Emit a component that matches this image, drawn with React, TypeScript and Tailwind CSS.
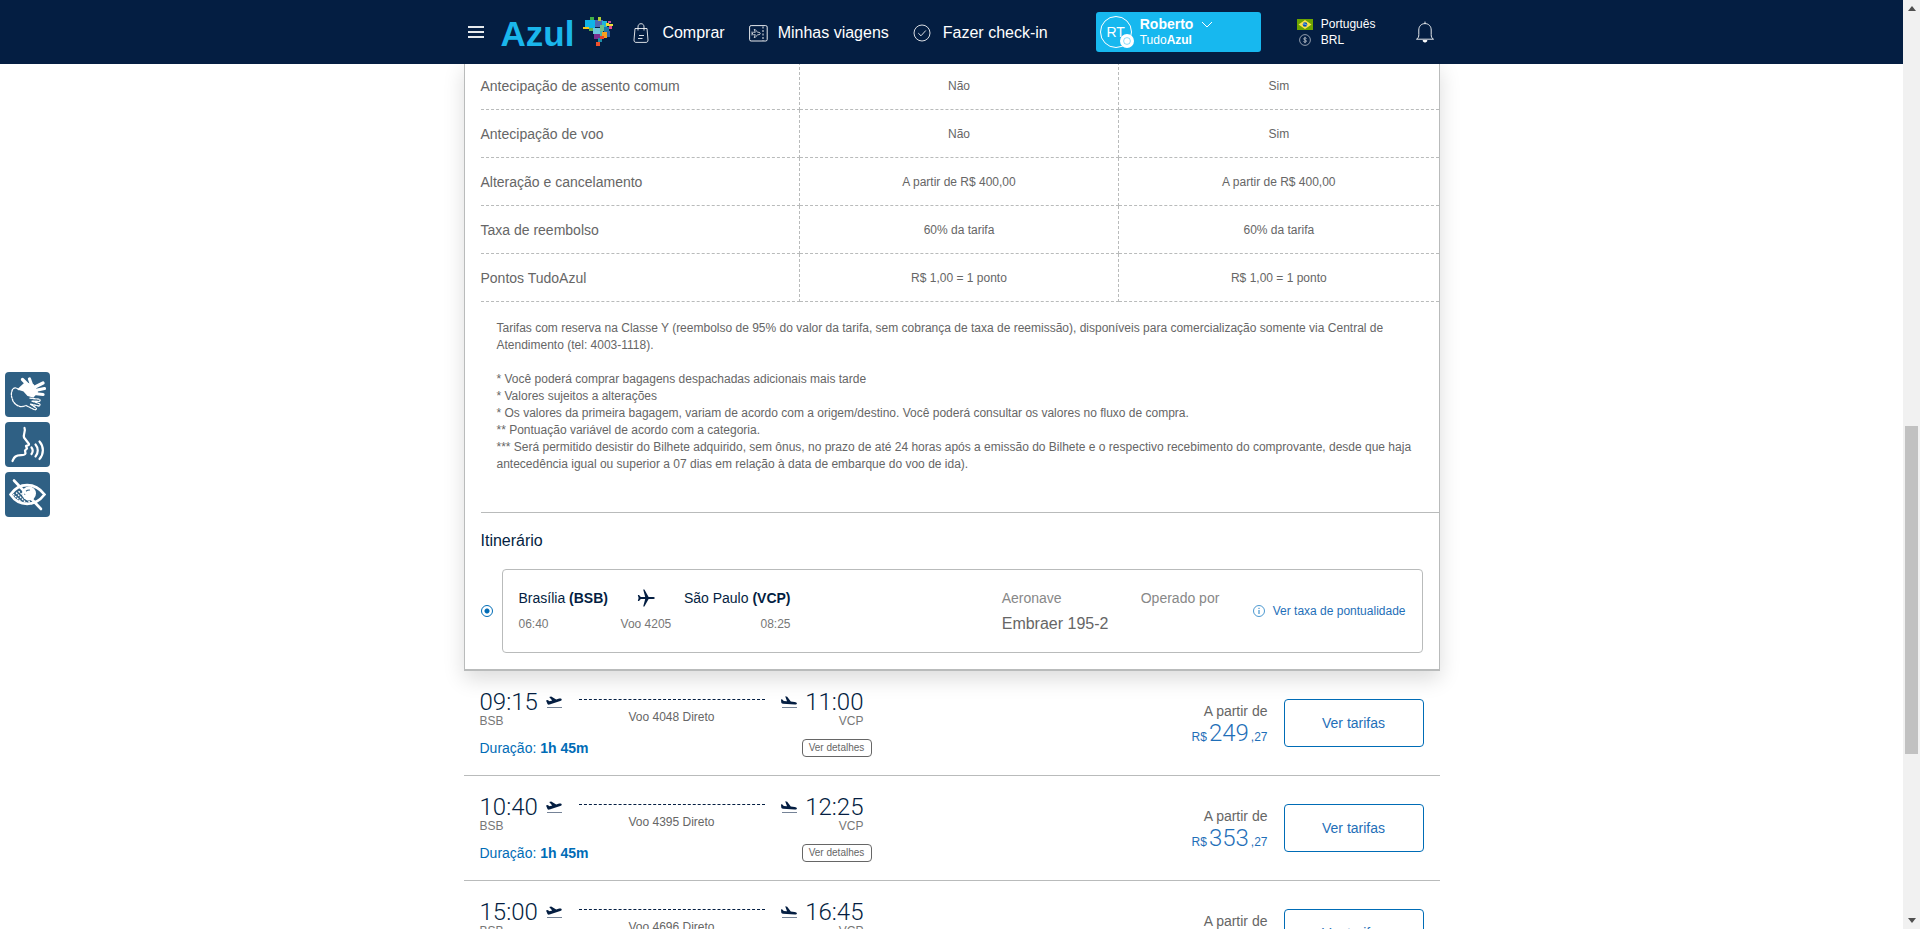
import React from "react";

const fares = [
  ["Antecipação de assento comum", "Não", "Sim"],
  ["Antecipação de voo", "Não", "Sim"],
  ["Alteração e cancelamento", "A partir de R$ 400,00", "A partir de R$ 400,00"],
  ["Taxa de reembolso", "60% da tarifa", "60% da tarifa"],
  ["Pontos TudoAzul", "R$ 1,00 = 1 ponto", "R$ 1,00 = 1 ponto"],
];

const flights = [
  { dep: "09:15", arr: "11:00", no: "4048", price: "249" },
  { dep: "10:40", arr: "12:25", no: "4395", price: "353" },
  { dep: "15:00", arr: "16:45", no: "4696", price: "353" },
];

const mapTiles: [number, number, number, number, string][] = [
  [2, 3, 10, 8, "#10b5e8"],
  [7, 0, 4, 3, "#3fae49"],
  [0, 10, 6, 2, "#f2c81b"],
  [12, 3, 8, 7, "#5069b3"],
  [15, 0, 3, 4, "#b5cf35"],
  [19, 4, 5, 6, "#22b5d8"],
  [23, 6, 3, 3, "#f4dc2a"],
  [25, 4, 3, 2, "#c04fa0"],
  [26, 7, 4, 2, "#e9e13a"],
  [6, 11, 5, 3, "#5fb446"],
  [10, 11, 7, 6, "#6cc7dd"],
  [17, 8, 4, 6, "#6cc08a"],
  [21, 10, 5, 5, "#1c78a8"],
  [26, 9, 3, 3, "#e64a8b"],
  [17, 14, 3, 5, "#4fb5a6"],
  [11, 17, 6, 5, "#7b2f8e"],
  [19, 15, 5, 6, "#f7a01e"],
  [24, 14, 3, 6, "#2c62a8"],
  [15, 21, 4, 4, "#1d8fa8"],
  [17, 19, 4, 3, "#e4432c"],
  [13, 25, 4, 4, "#f0502b"],
];

function BrazilMap() {
  return (
    <svg width="30" height="30" viewBox="0 0 30 30" shapeRendering="crispEdges" aria-hidden="true">
      {mapTiles.map(([x, y, w, h, c], i) => (
        <rect key={i} x={x} y={y} width={w} height={h} fill={c} />
      ))}
    </svg>
  );
}

function TakeoffIcon() {
  return (
    <svg width="16" height="13" viewBox="0 0 16 13" aria-hidden="true">
      <path d="M0 4.600 1.600 4.100 3.600 5.200 6.200 4.500 3.200 1 5.200.4 10.200 3.400 13.200 2.600C14.600 2.300 15.600 2.700 15.700 3.500 15.800 4.300 15.200 4.800 14.200 5L3.600 8.500C2.500 8.800 1.900 8.600 1.500 7.900Z" fill="#041e42" />
      <path d="M1 11.500H16" stroke="#041e42" strokeOpacity=".55" />
    </svg>
  );
}

function LandingIcon() {
  return (
    <svg width="16" height="13" viewBox="0 0 16 13" aria-hidden="true">
      <path d="M0 3.200 1.400 3.400 2.800 5 6 5.300 4.200.3 6.200.8 9.800 5.600 13.600 5.900C15 6 15.900 6.600 15.900 7.500 15.900 8.400 15 8.700 13.800 8.600L2 7.700C.8 7.600.3 7 .2 6Z" fill="#041e42" />
      <path d="M1 11.500H16" stroke="#041e42" strokeOpacity=".55" />
    </svg>
  );
}

function Header() {
  return (
    <header className="relative z-10 h-16 shrink-0 bg-[#041e42] text-white">
      <div className="mx-auto flex h-full w-full max-w-[976px] items-center">
        <button aria-label="Menu" className="ml-1 flex w-4 flex-col gap-[3px]">
          <span className="h-[2px] w-4 bg-white/90" />
          <span className="h-[2px] w-4 bg-white/90" />
          <span className="h-[2px] w-4 bg-white/90" />
        </button>
        <a href="#" className="ml-[17px] flex items-center gap-[9px]">
          <span className="pt-1 text-[35px] leading-9 font-bold text-[#1ab6ec]">Azul</span>
          <BrazilMap />
        </a>
        <nav className="ml-5 flex items-center gap-6 pt-[2px] text-base">
          <a href="#" className="flex items-center gap-[13px]">
            <svg width="16" height="20" viewBox="0 0 16 20" fill="none" stroke="#fff" strokeOpacity=".85" aria-hidden="true">
              <path d="M2 5.500H14L15 17C15 18.500 14.300 19.400 13 19.400H3C1.700 19.400 1 18.500 1 17Z" />
              <path d="M5 7.500V4C5 2 6 .7 8 .7S11 2 11 4V7.500M6 12.500H11M5 15.500H9.500" />
            </svg>
            Comprar
          </a>
          <a href="#" className="flex items-center gap-[10px]">
            <svg width="19" height="17" viewBox="0 0 19 17" fill="none" stroke="#fff" strokeOpacity=".9" aria-hidden="true">
              <rect x=".6" y=".6" width="17.600" height="15.400" rx="1.500" />
              <path d="M14 1.500V16" strokeDasharray="2 1.500" />
              <path d="M3 6.500V10.500M3 8.500 4.500 7.300H6.300L5.200 4.500H6.200L8.600 7.300H10C11.700 7.700 11.700 9.300 10 9.700H8.600L6.200 12.500H5.200L6.300 9.700H4.500Z" strokeWidth=".8" />
            </svg>
            Minhas viagens
          </a>
          <a href="#" className="flex items-center gap-3">
            <svg width="18" height="18" viewBox="0 0 18 18" fill="none" stroke="#fff" strokeOpacity=".85" aria-hidden="true">
              <circle cx="9" cy="9" r="8" />
              <path d="M5.300 9.200 8 11.800 12.800 6.500" />
            </svg>
            Fazer check-in
          </a>
        </nav>
        <button className="ml-12 flex h-10 w-[165px] items-center gap-2 rounded-[3px] bg-[#17b8ef] pl-1 text-left">
          <span className="relative flex size-8 items-center justify-center rounded-full border border-white text-sm">
            RT
            <svg className="absolute -right-[3px] -bottom-[1px]" width="14" height="14" viewBox="0 0 14 14" aria-hidden="true">
              <circle cx="7" cy="7" r="7" fill="#fff" />
              <circle cx="7" cy="7" r="3.400" fill="none" stroke="#17b8ef" strokeOpacity=".5" />
            </svg>
          </span>
          <span className="flex flex-col">
            <span className="flex items-center gap-2 text-sm leading-4 font-bold">
              Roberto
              <svg width="12" height="7" viewBox="0 0 12 7" fill="none" stroke="#fff" aria-hidden="true">
                <path d="M1 1 6 6 11 1" />
              </svg>
            </span>
            <span className="text-xs leading-4">
              Tudo<b>Azul</b>
            </span>
          </span>
        </button>
        <div className="ml-9 flex flex-col text-xs leading-4">
          <button className="flex items-center gap-2 text-left">
            <svg width="16" height="11" viewBox="0 0 16 11" aria-hidden="true">
              <rect width="16" height="11" fill="#6ca400" />
              <path d="M8 1 14.500 5.500 8 10 1.500 5.500Z" fill="#ffe14d" />
              <circle cx="8" cy="5.500" r="2.300" fill="#0052b4" />
              <path d="M5.900 5C7.500 4.700 9 5.200 10 6.400" stroke="#fff" strokeWidth=".6" fill="none" />
            </svg>
            Português
          </button>
          <button className="flex items-center gap-2 text-left">
            <svg className="mx-[2px]" width="12" height="12" viewBox="0 0 12 12" fill="none" stroke="#fff" strokeOpacity=".7" aria-hidden="true">
              <circle cx="6" cy="6" r="5.400" strokeWidth=".8" />
              <path d="M7.600 4.600C7.400 3.600 4.600 3.500 4.600 4.900S7.600 5.800 7.600 7.100 4.600 8.500 4.400 7.300M6 2.800V9.200" strokeWidth=".8" />
            </svg>
            BRL
          </button>
        </div>
        <button aria-label="Notificações" className="ml-10">
          <svg width="20" height="22" viewBox="0 0 20 22" fill="none" stroke="#fff" strokeOpacity=".9" aria-hidden="true">
            <path d="M1.500 18.200C3.300 17.200 3.800 15.800 3.800 13.500V9C3.800 5.300 6.300 2.600 10 2.600S16.200 5.300 16.200 9V13.500C16.200 15.800 16.700 17.200 18.500 18.200ZM10 .6V2.600" />
            <path d="M8 19.500H12C12 21.600 8 21.600 8 19.500Z" fill="#fff" />
          </svg>
        </button>
      </div>
    </header>
  );
}

function FareDetails() {
  return (
    <section className="relative -mt-[2px] border-x border-b-2 border-[#b9bbbb] bg-white pl-4 shadow-[0_8px_20px_rgba(0,0,0,0.14)]">
      <table className="w-full table-fixed border-separate border-spacing-0 text-[#666]">
        <tbody>
          {fares.map(([label, a, b]) => (
            <tr key={label} className="h-12">
              <th scope="row" className="border-r border-b border-dashed border-[#b9bbbb] text-left text-sm font-normal">{label}</th>
              <td className="border-r border-b border-dashed border-[#b9bbbb] text-center text-xs">{a}</td>
              <td className="border-b border-dashed border-[#b9bbbb] text-center text-xs">{b}</td>
            </tr>
          ))}
        </tbody>
      </table>
      <div className="px-4 pt-[18px] pb-[39px] text-xs leading-[17px] text-[#666]">
        <p>
          Tarifas com reserva na Classe Y (reembolso de 95% do valor da tarifa, sem cobrança de taxa de reemissão), disponíveis para comercialização somente via Central de Atendimento (tel: 4003-1118).
        </p>
        <p className="mt-[17px]">* Você poderá comprar bagagens despachadas adicionais mais tarde</p>
        <p>* Valores sujeitos a alterações</p>
        <p>* Os valores da primeira bagagem, variam de acordo com a origem/destino. Você poderá consultar os valores no fluxo de compra.</p>
        <p>** Pontuação variável de acordo com a categoria.</p>
        <p>
          *** Será permitido desistir do Bilhete adquirido, sem ônus, no prazo de até 24 horas após a emissão do Bilhete e o respectivo recebimento do comprovante, desde que haja antecedência igual ou superior a 07 dias em relação à data de embarque do voo de ida).
        </p>
      </div>
      <div className="border-t border-[#b9bbbb] py-4 pr-4">
        <h2 className="text-base leading-6 text-[#041e42]">Itinerário</h2>
        <div className="mt-4 flex items-center gap-[9px]">
          <input
            type="radio"
            name="itinerary"
            defaultChecked
            aria-label="Voo 4205"
            className="size-3 shrink-0 appearance-none rounded-full border border-[#006cb6] bg-[radial-gradient(circle,#006cb6_2px,white_3px)]"
          />
          <div className="flex h-[84px] flex-1 items-center rounded border border-[#b9bbbb] px-4">
            <div className="grid w-[272px] grid-cols-[auto_auto_auto] items-center justify-between gap-y-[6px] text-xs leading-5 text-[#777]">
              <span className="text-sm leading-5 text-[#041e42]">Brasília <b>(BSB)</b></span>
              <svg className="justify-self-center" width="18" height="18" viewBox="0 0 18 18" fill="#041e42" aria-hidden="true">
                <path d="M17.800 9C17.800 9.600 16.900 10 15.600 10H11.600L7.400 17.600H6.200L8.200 10H3.800L2 12H.8L1.600 9 .8 6H2L3.800 8H8.200L6.200.4H7.400L11.600 8H15.600C16.900 8 17.800 8.400 17.800 9Z" />
              </svg>
              <span className="text-sm leading-5 text-[#041e42]">São Paulo <b>(VCP)</b></span>
              <span>06:40</span>
              <span>Voo 4205</span>
              <span className="text-right">08:25</span>
            </div>
            <div className="ml-auto flex w-[139px] flex-col gap-[6px]">
              <span className="text-sm leading-5 text-[#888]">Aeronave</span>
              <span className="text-base leading-5 text-[#666]">Embraer 195-2</span>
            </div>
            <div className="flex w-[112px] flex-col gap-[6px]">
              <span className="text-sm leading-5 text-[#888]">Operado por</span>
              <span className="h-5" />
            </div>
            <a href="#" className="flex items-center gap-2 text-xs text-[#1f6fb8]">
              <svg width="12" height="12" viewBox="0 0 12 12" fill="none" stroke="#1f7fc4" aria-hidden="true">
                <circle cx="6" cy="6" r="5.500" strokeWidth=".8" />
                <path d="M6 5V9M6 2.800V4" />
              </svg>
              Ver taxa de pontualidade
            </a>
          </div>
        </div>
      </div>
    </section>
  );
}

function FlightRow({ f }: { f: (typeof flights)[number] }) {
  return (
    <li className="flex h-[105px] shrink-0 items-start justify-between border-b border-[#b9bbbb] px-4">
      <div className="flex w-[392px] flex-col pt-[19px]">
        <div className="flex items-start justify-between pr-2">
          <div className="flex flex-col">
            <span className="flex items-center gap-2 font-[Roboto] text-2xl leading-6 font-light text-[#041e42]">
              {f.dep} <TakeoffIcon />
            </span>
            <span className="text-xs leading-[14px] text-[#777]">BSB</span>
          </div>
          <div className="flex w-[186px] flex-col items-center gap-[9px] pt-[9px] text-xs leading-4 text-[#666]">
            <span className="w-full border-t border-dashed border-[#041e42]" />
            <span>Voo {f.no} Direto</span>
          </div>
          <div className="flex flex-col items-end">
            <span className="flex items-center gap-2 font-[Roboto] text-2xl leading-6 font-light text-[#041e42]">
              <LandingIcon /> {f.arr}
            </span>
            <span className="text-xs leading-[14px] text-[#777]">VCP</span>
          </div>
        </div>
        <div className="mt-[11px] flex items-center justify-between">
          <span className="text-sm leading-[18px] text-[#006cb6]">
            Duração: <b>1h 45m</b>
          </span>
          <button className="h-[18px] w-[70px] rounded border border-[#666] text-[10px] leading-4 text-[#666]">Ver detalhes</button>
        </div>
      </div>
      <div className="flex gap-4 pt-7">
        <div className="flex flex-col items-end pt-[2px] text-[#1f6fb8]">
          <span className="text-sm leading-5 text-[#666]">A partir de</span>
          <span className="flex items-baseline gap-[2px] text-xs leading-6">
            R$<span className="font-[Roboto] text-2xl leading-6 font-light">{f.price}</span>,27
          </span>
        </div>
        <button className="h-12 w-[140px] rounded border border-[#006cb6] text-sm text-[#1f6fb8]">Ver tarifas</button>
      </div>
    </li>
  );
}

function AccessibilityBar() {
  const tile = "flex size-[45px] items-center justify-center rounded bg-[#2f6084]";
  return (
    <aside className="fixed top-[372px] left-[5px] z-20 flex flex-col gap-[5px]">
      <button aria-label="Libras" className={tile}>
        <svg width="37" height="37" viewBox="0 0 37 37" fill="none" stroke="#fff" strokeLinecap="round" strokeLinejoin="round" aria-hidden="true">
          <path d="M10 13 16 7.500 24 9 28 16 24 20.500 19 19 15 14.500Z" fill="#fff" strokeWidth="2" />
          <path d="M19 9 13.500 3.500M23 10 20.500 3M25 11.500 34 7M26 14.500 35.500 12.500M25 17.500 34 18.500" strokeWidth="3.200" />
          <path d="M9.500 13.500C7 11 3.500 11.500 3 15 1.500 19 3 22 4 25 7 30 12 32 17 29.500L25 33.500C27.500 34.500 28 32.500 26.500 31.500L21 28 29.500 30C31.500 30 31.500 28 30 27.500L22.500 25 30 25.500C31.500 25 31.500 23.500 30 23.200L20 22" strokeWidth="1.300" strokeDasharray="2.200 1.200" />
        </svg>
      </button>
      <button aria-label="Voz" className={tile}>
        <svg width="37" height="37" viewBox="0 0 37 37" fill="none" stroke="#fff" strokeWidth="2.200" strokeLinecap="round" strokeLinejoin="round" aria-hidden="true">
          <path d="M15.500 2C17 5 14 8 15 11.500L20 18C20.500 19.500 18 19.500 17 20L18 22.500 16 24.500 16.500 27.500C15.500 30.500 10 28 6.500 30.500 4.500 32 4.500 33 3.500 35" />
          <path d="M22.500 21.500C24 23.500 24 26 22.500 28M26.500 18.500C29.500 22 29.500 27 26.500 30.500M30.500 15.500C35 20.500 35 28 30.500 33" />
        </svg>
      </button>
      <button aria-label="Alto contraste" className={tile}>
        <svg width="37" height="37" viewBox="0 0 37 37" fill="none" stroke="#fff" strokeWidth="2.600" strokeLinecap="round" aria-hidden="true">
          <path d="M1.500 18.500C10 6 26 6 35.500 18.500 26 31 10 31 1.500 18.500Z" />
          <path d="M4.500 18.500 14.500 28M7.500 17 19 29M10 15.500 23 28.500" strokeWidth="1.400" strokeDasharray=".6 2.200" />
          <circle cx="20" cy="17.500" r="7" fill="#fff" stroke="none" />
          <path d="M16 18.500C16 15.500 18 14 20.500 14" stroke="#2f6084" strokeWidth="1.200" />
          <path d="M5 4.500 32 33" />
        </svg>
      </button>
    </aside>
  );
}

function ScrollTrack() {
  return (
    <div aria-hidden="true" className="flex w-[17px] shrink-0 flex-col items-center bg-[#f1f1f1] py-[6px]">
      <svg width="8" height="5" viewBox="0 0 8 5" fill="#505050"><path d="M4 0 8 5H0Z" /></svg>
      <div className="flex-[415]" />
      <div className="w-[13px] flex-[328] bg-[#c1c1c1]" />
      <div className="flex-[164]" />
      <svg width="8" height="5" viewBox="0 0 8 5" fill="#505050"><path d="M0 0H8L4 5Z" /></svg>
    </div>
  );
}

export default function App() {
  return (
    <div className="flex h-screen overflow-hidden bg-white font-['Liberation_Sans',Arial,sans-serif]">
      <div className="flex min-w-0 flex-1 flex-col overflow-hidden">
        <Header />
        <main className="mx-auto w-full max-w-[976px]">
          <FareDetails />
          <ul>
            {flights.map((f) => (
              <FlightRow key={f.dep} f={f} />
            ))}
          </ul>
        </main>
      </div>
      <AccessibilityBar />
      <ScrollTrack />
    </div>
  );
}
